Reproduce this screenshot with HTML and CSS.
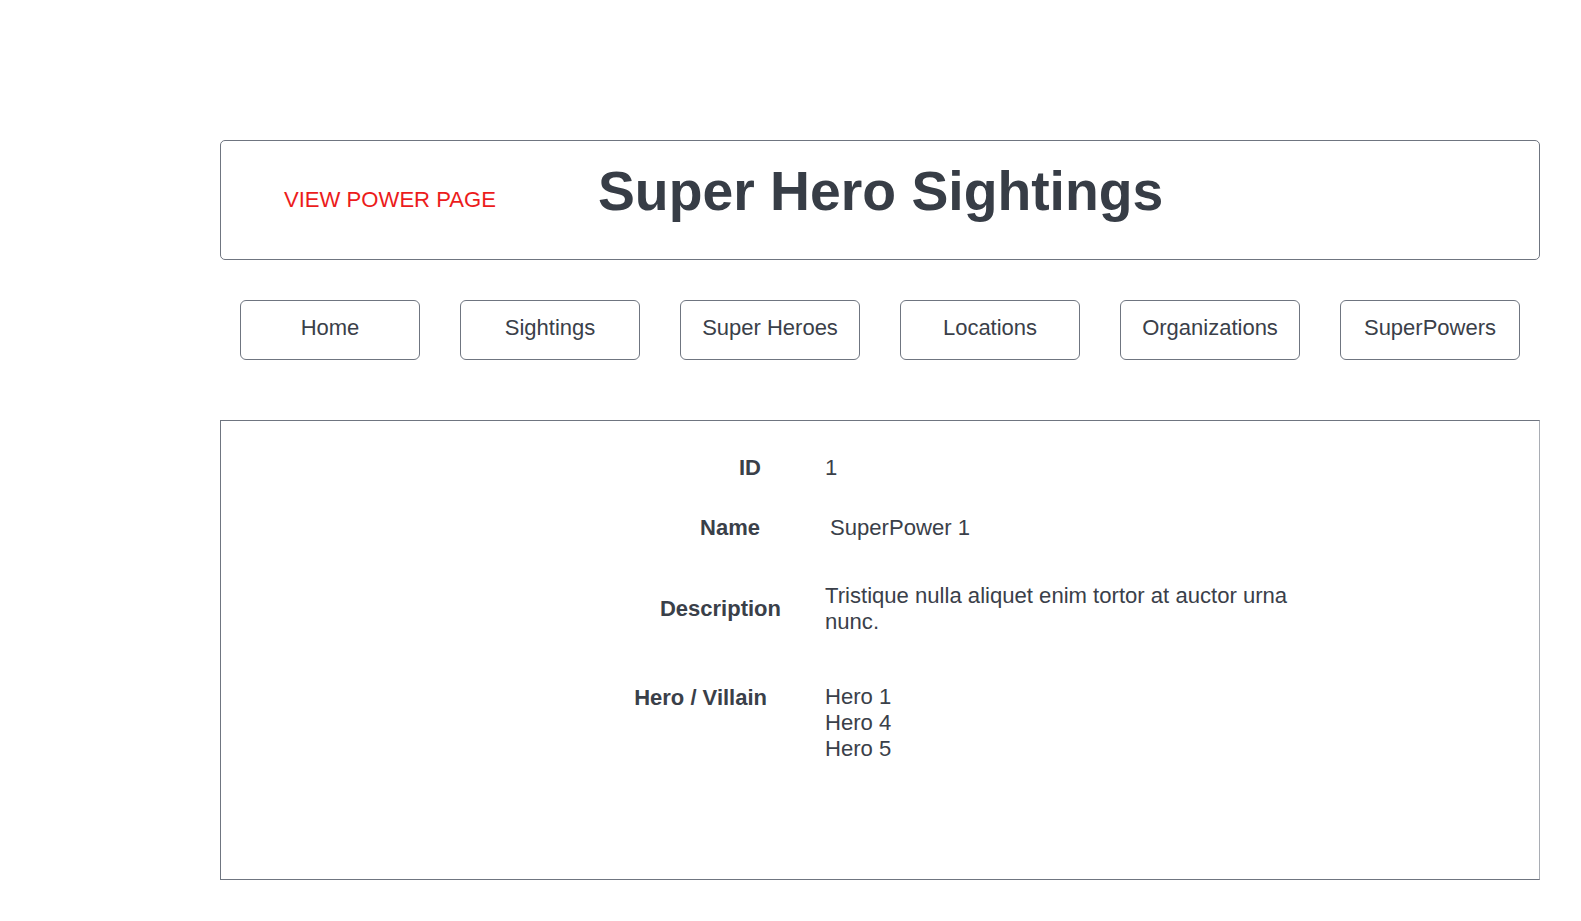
FILE: index.html
```html
<!DOCTYPE html>
<html lang="en">
<head>
<meta charset="utf-8">
<title>Super Hero Sightings - View Power</title>
<link rel="stylesheet" href="styles.css">
</head>
<body>
<div class="page">
  <header class="header">
    <span class="page-tag">VIEW POWER PAGE</span>
    <h1 class="title">Super Hero Sightings</h1>
  </header>
  <nav class="nav">
    <a class="nav-btn" href="#">Home</a>
    <a class="nav-btn" href="#">Sightings</a>
    <a class="nav-btn" href="#">Super Heroes</a>
    <a class="nav-btn" href="#">Locations</a>
    <a class="nav-btn" href="#">Organizations</a>
    <a class="nav-btn" href="#">SuperPowers</a>
  </nav>
  <section class="details">
    <div class="row row-id">
      <div class="label">ID</div>
      <div class="value">1</div>
    </div>
    <div class="row row-name">
      <div class="label">Name</div>
      <div class="value">SuperPower 1</div>
    </div>
    <div class="row row-desc">
      <div class="label">Description</div>
      <div class="value">Tristique nulla aliquet enim tortor at auctor urna<br>nunc.</div>
    </div>
    <div class="row row-hero">
      <div class="label">Hero / Villain</div>
      <div class="value">Hero 1<br>Hero 4<br>Hero 5</div>
    </div>
  </section>
</div>
</body>
</html>
```
FILE: styles.css
```css
* { box-sizing: border-box; }

html, body {
  margin: 0;
  padding: 0;
  background: #ffffff;
}

body {
  font-family: "Liberation Sans", Arial, sans-serif;
  color: #3a4049;
}

.page {
  width: 1320px;
  margin-left: 220px;
  padding-top: 140px;
}

.header {
  height: 120px;
  border: 1px solid #6f7580;
  border-radius: 5px;
  display: flex;
  align-items: center;
  padding-left: 63px;
}

.page-tag {
  font-size: 22.1px;
  color: #ec1c1c;
  line-height: 26px;
  margin-bottom: 1px;
}

.title {
  margin: 0 0 18px 102px;
  font-size: 55.3px;
  font-weight: bold;
  line-height: 64px;
  color: #373d46;
}

.nav {
  display: flex;
  gap: 40px;
  padding: 0 20px;
  margin-top: 40px;
}

.nav-btn {
  width: 180px;
  height: 60px;
  border: 1px solid #6f7580;
  border-radius: 6px;
  display: flex;
  align-items: center;
  justify-content: center;
  font-size: 22px;
  color: #3a4049;
  text-decoration: none;
  padding-bottom: 5px;
}

.details {
  margin-top: 60px;
  height: 460px;
  border: 1px solid #6f7580;
  border-right-color: #a9adb4;
  padding-top: 34px;
  display: flex;
  flex-direction: column;
}

.row {
  display: grid;
  grid-template-columns: 560px 1fr;
  column-gap: 44px;
  font-size: 22px;
  line-height: 26px;
}

.value {
  font-size: 22.1px;
}

.label {
  font-weight: bold;
  text-align: right;
}

.row-id .label { padding-right: 20px; }

.row-name { margin-top: 34px; }
.row-name .label { padding-right: 21px; }
.row-name .value { padding-left: 5px; }

.row-desc {
  margin-top: 42px;
  align-items: center;
}
.row-desc .label { padding-right: 0; }

.row-hero { margin-top: 49px; }
.row-hero .label {
  padding-right: 14px;
  padding-top: 1px;
}
```
